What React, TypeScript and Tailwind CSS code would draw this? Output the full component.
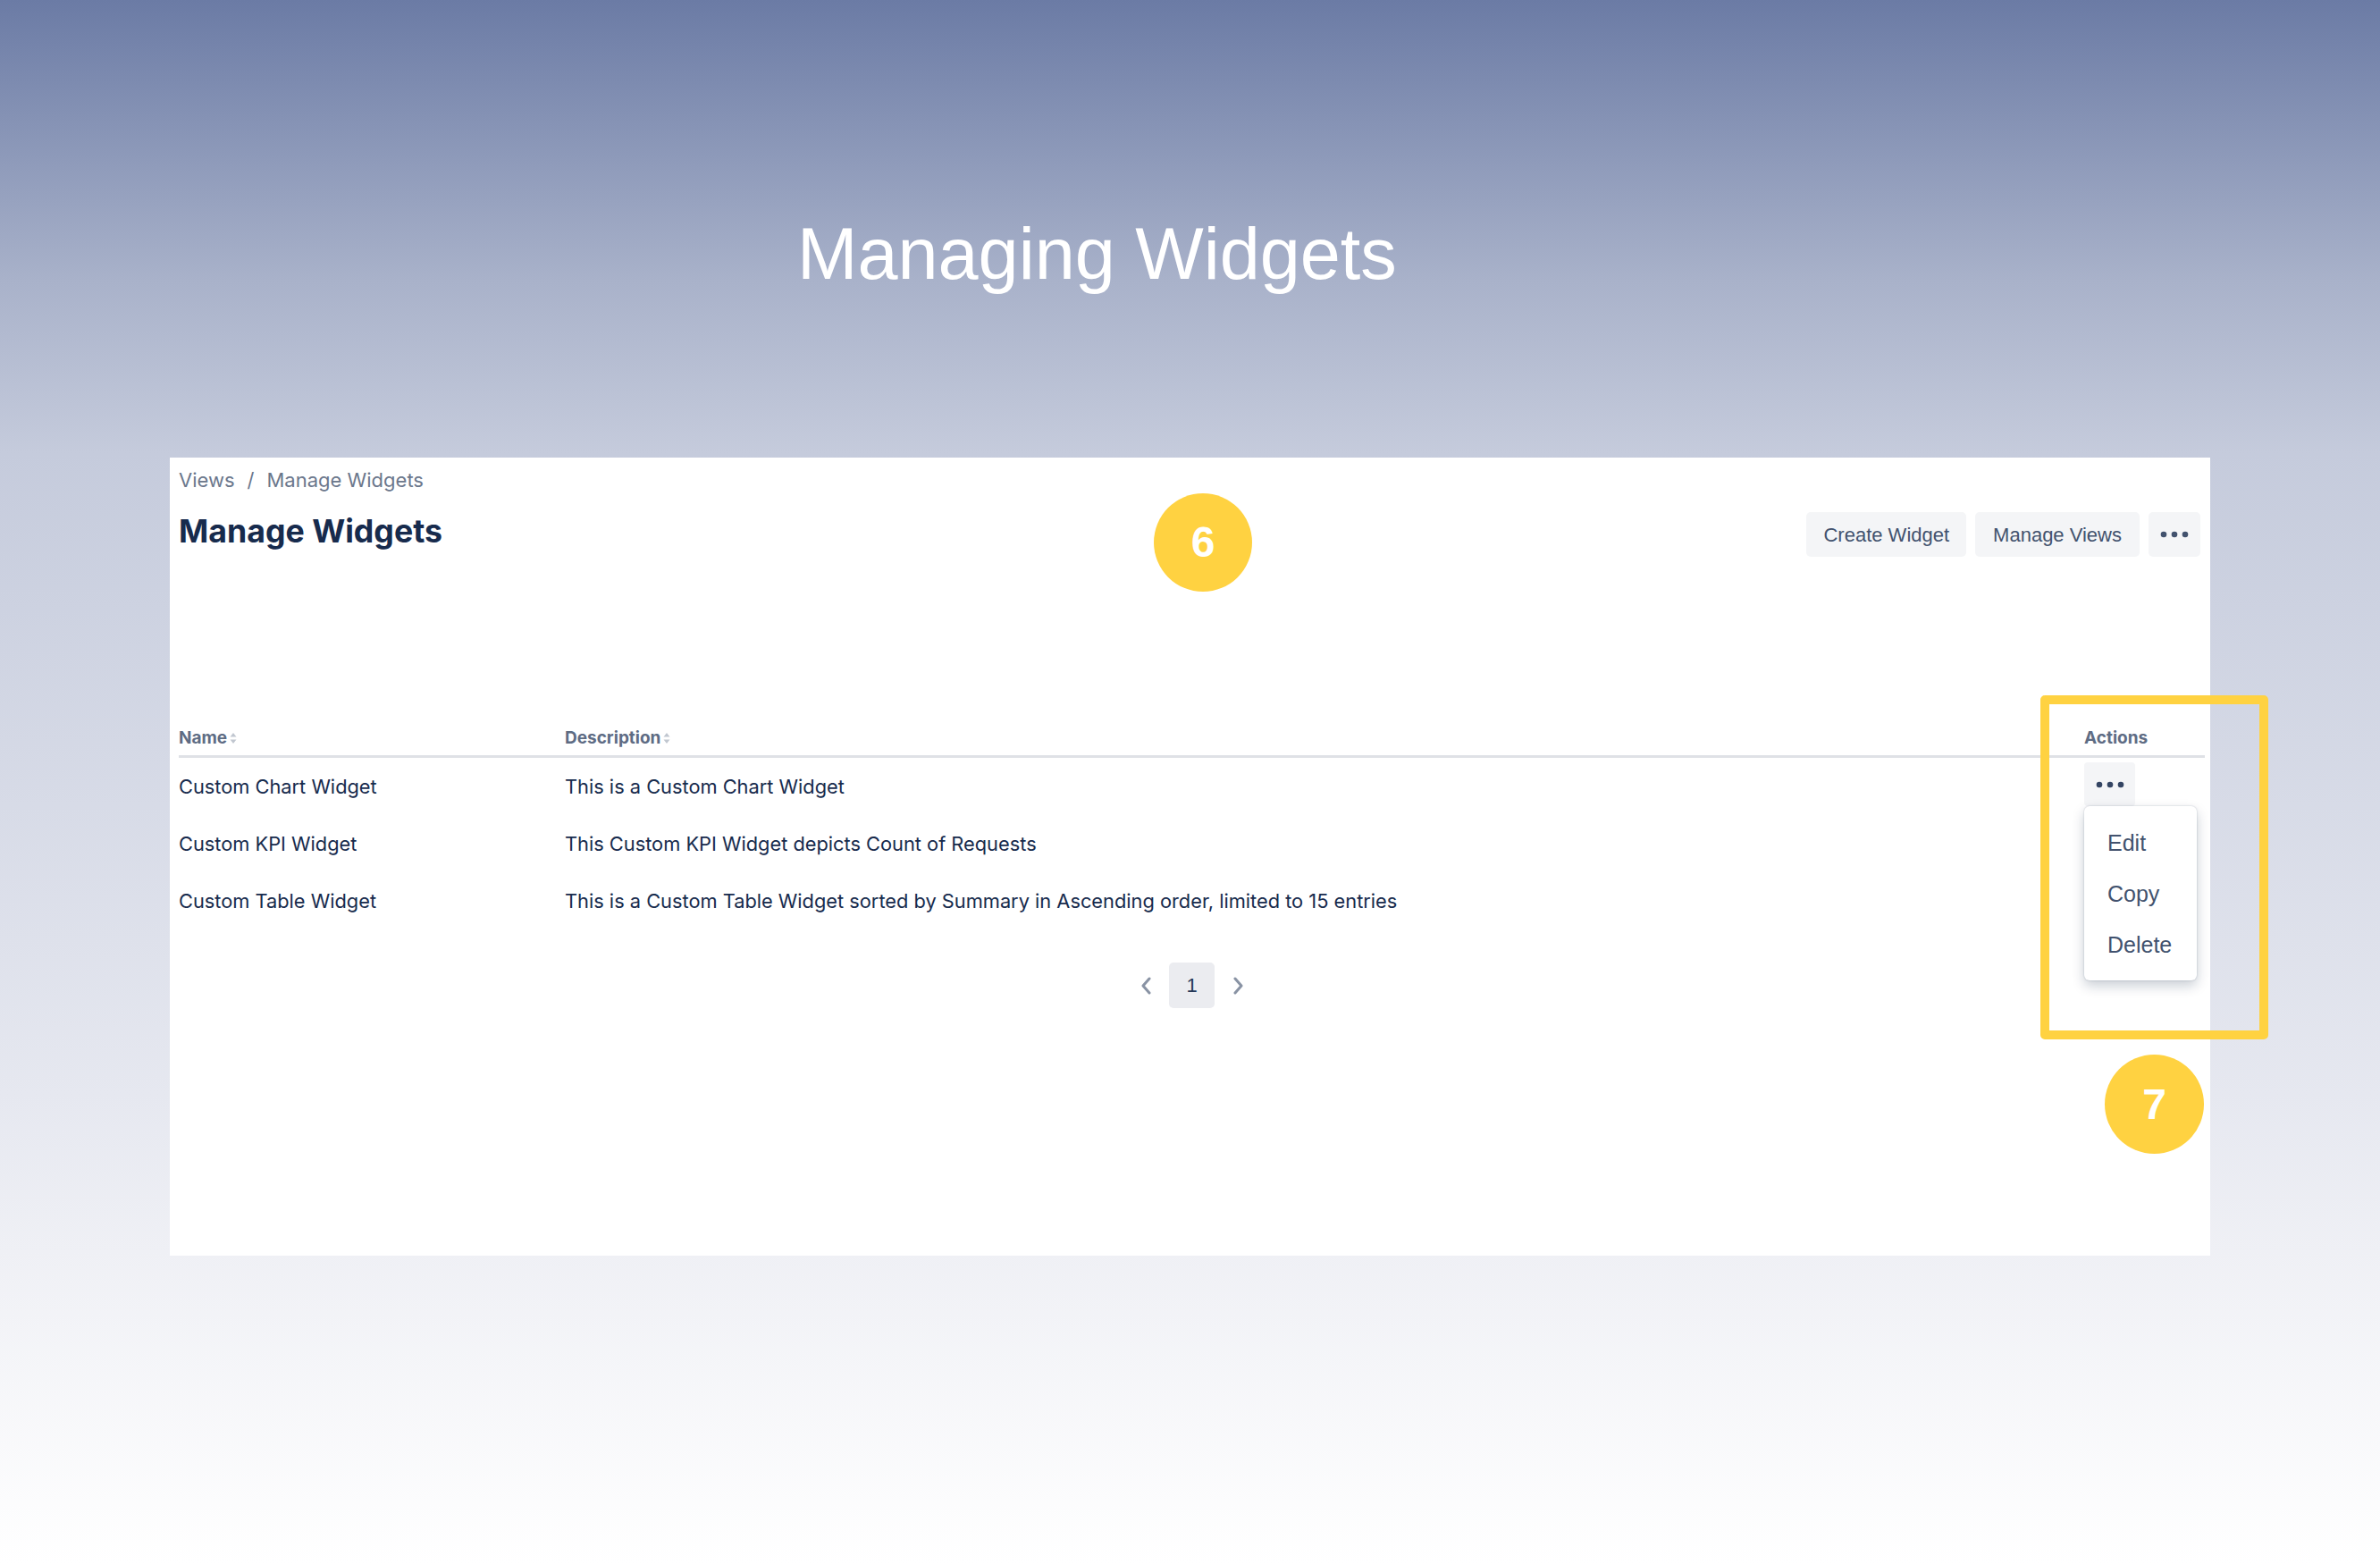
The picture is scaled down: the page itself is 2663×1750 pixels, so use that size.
import React from 'react'

const rows = [
  { name: 'Custom Chart Widget', description: 'This is a Custom Chart Widget' },
  { name: 'Custom KPI Widget', description: 'This Custom KPI Widget depicts Count of Requests' },
  {
    name: 'Custom Table Widget',
    description: 'This is a Custom Table Widget sorted by Summary in Ascending order, limited to 15 entries',
  },
]

function Dots({ color = '#42526e' }: { color?: string }) {
  return (
    <svg width="32" height="8" viewBox="0 0 32 8" fill={color}>
      <circle cx="4" cy="4" r="3.3" />
      <circle cx="16" cy="4" r="3.3" />
      <circle cx="28" cy="4" r="3.3" />
    </svg>
  )
}

function SortIcon() {
  return (
    <svg width="8" height="14" viewBox="0 0 8 14" className="ml-[3px]" fill="#c1c7d0">
      <path d="M4 1 L7.5 5.5 H0.5 Z" />
      <path d="M4 13 L7.5 8.5 H0.5 Z" />
    </svg>
  )
}

function Chevron({ dir }: { dir: 'left' | 'right' }) {
  return (
    <svg width="14" height="20" viewBox="0 0 14 20" fill="none">
      <path
        d={dir === 'left' ? 'M10 2 L3 10 L10 18' : 'M4 2 L11 10 L4 18'}
        stroke="#8993a4"
        strokeWidth="3"
        strokeLinecap="round"
        strokeLinejoin="round"
      />
    </svg>
  )
}

function Badge({ n, className }: { n: string; className: string }) {
  return (
    <div
      className={`absolute flex items-center justify-center rounded-full bg-[#ffd241] font-['Liberation_Sans',sans-serif] text-[48px] font-bold text-white ${className}`}
    >
      {n}
    </div>
  )
}

export default function App() {
  return (
    <div className="relative h-[1750px] w-[2663px] overflow-hidden bg-[linear-gradient(180deg,#6b7ba5_0%,#a9b2ca_18%,#c5cbdc_29%,#e6e8f0_70%,#eff0f5_80%,#ffffff_100%)] font-[Inter,sans-serif]">
      <div className="h-[512px] pl-[892px] pt-[244px]">
        <h1 className="font-['Liberation_Sans',sans-serif] text-[81px] leading-none text-white">
          Managing Widgets
        </h1>
      </div>

      <div className="mx-[190px] h-[893px] bg-white pl-[10px] pr-[6px]">
        <nav className="flex items-center pt-[10px] text-[22px] leading-[30px] text-[#6b778c]">
          <span>Views</span>
          <span className="px-[14px]">/</span>
          <span>Manage Widgets</span>
        </nav>

        <div className="mt-[20px] flex items-start justify-between">
          <h2 className="text-[35.7px] font-bold leading-[44px] text-[#172b4d]">Manage Widgets</h2>
          <div className="mr-[5px] mt-[1px] flex gap-[10px] font-['Liberation_Sans',sans-serif] text-[22px] text-[#42526e]">
            <button className="h-[50px] rounded-[5px] bg-[#f4f5f7] px-[19px]">Create Widget</button>
            <button className="h-[50px] rounded-[5px] bg-[#f4f5f7] px-[20px]">Manage Views</button>
            <button className="flex h-[50px] w-[58px] items-center justify-center rounded-[5px] bg-[#f4f5f7]">
              <Dots />
            </button>
          </div>
        </div>

        <div className="mt-[191px]">
          <div className="grid grid-cols-[432px_1fr_135px] border-b-[3px] border-[#dfe1e6] pb-[7px] text-[19px] font-bold leading-[24px] text-[#5e6c84]">
            <div className="flex items-center">
              Name
              <SortIcon />
            </div>
            <div className="flex items-center">
              Description
              <SortIcon />
            </div>
            <div>Actions</div>
          </div>

          {rows.map((row, i) => (
            <div
              key={row.name}
              className="grid h-[64px] grid-cols-[432px_1fr_135px] items-center text-[21.8px] leading-[30px] text-[#172b4d]"
            >
              <div>{row.name}</div>
              <div>{row.description}</div>
              <div className="relative self-stretch">
                {i === 0 && (
                  <>
                    <button className="mt-[5px] flex h-[49px] w-[57px] items-center justify-center rounded-[4px] bg-[#f4f5f7]">
                      <Dots color="#344563" />
                    </button>
                    <div className="absolute left-0 top-[54px] z-10 w-[126px] rounded-[6px] bg-white py-[12px] font-['Liberation_Sans',sans-serif] text-[25px] text-[#42526e] shadow-[0_6px_14px_rgba(9,30,66,0.22),0_0_2px_rgba(9,30,66,0.25)]">
                      <div className="flex h-[57px] items-center pl-[26px]">Edit</div>
                      <div className="flex h-[57px] items-center pl-[26px]">Copy</div>
                      <div className="flex h-[57px] items-center pl-[26px]">Delete</div>
                    </div>
                  </>
                )}
              </div>
            </div>
          ))}

          <div className="mt-[37px] flex justify-center">
            <button className="flex h-[51px] w-[51px] items-center justify-center">
              <Chevron dir="left" />
            </button>
            <button className="flex h-[51px] w-[51px] items-center justify-center rounded-[5px] bg-[#ebecf0] font-['Liberation_Sans',sans-serif] text-[22px] text-[#253858]">
              1
            </button>
            <button className="flex h-[51px] w-[51px] items-center justify-center">
              <Chevron dir="right" />
            </button>
          </div>
        </div>
      </div>

      <Badge n="6" className="left-[1291px] top-[552px] h-[110px] w-[110px]" />
      <div className="absolute left-[2283px] top-[778px] h-[385px] w-[255px] rounded-[5px] border-[10px] border-[#ffd241]" />
      <Badge n="7" className="left-[2355px] top-[1180px] h-[111px] w-[111px]" />
    </div>
  )
}
